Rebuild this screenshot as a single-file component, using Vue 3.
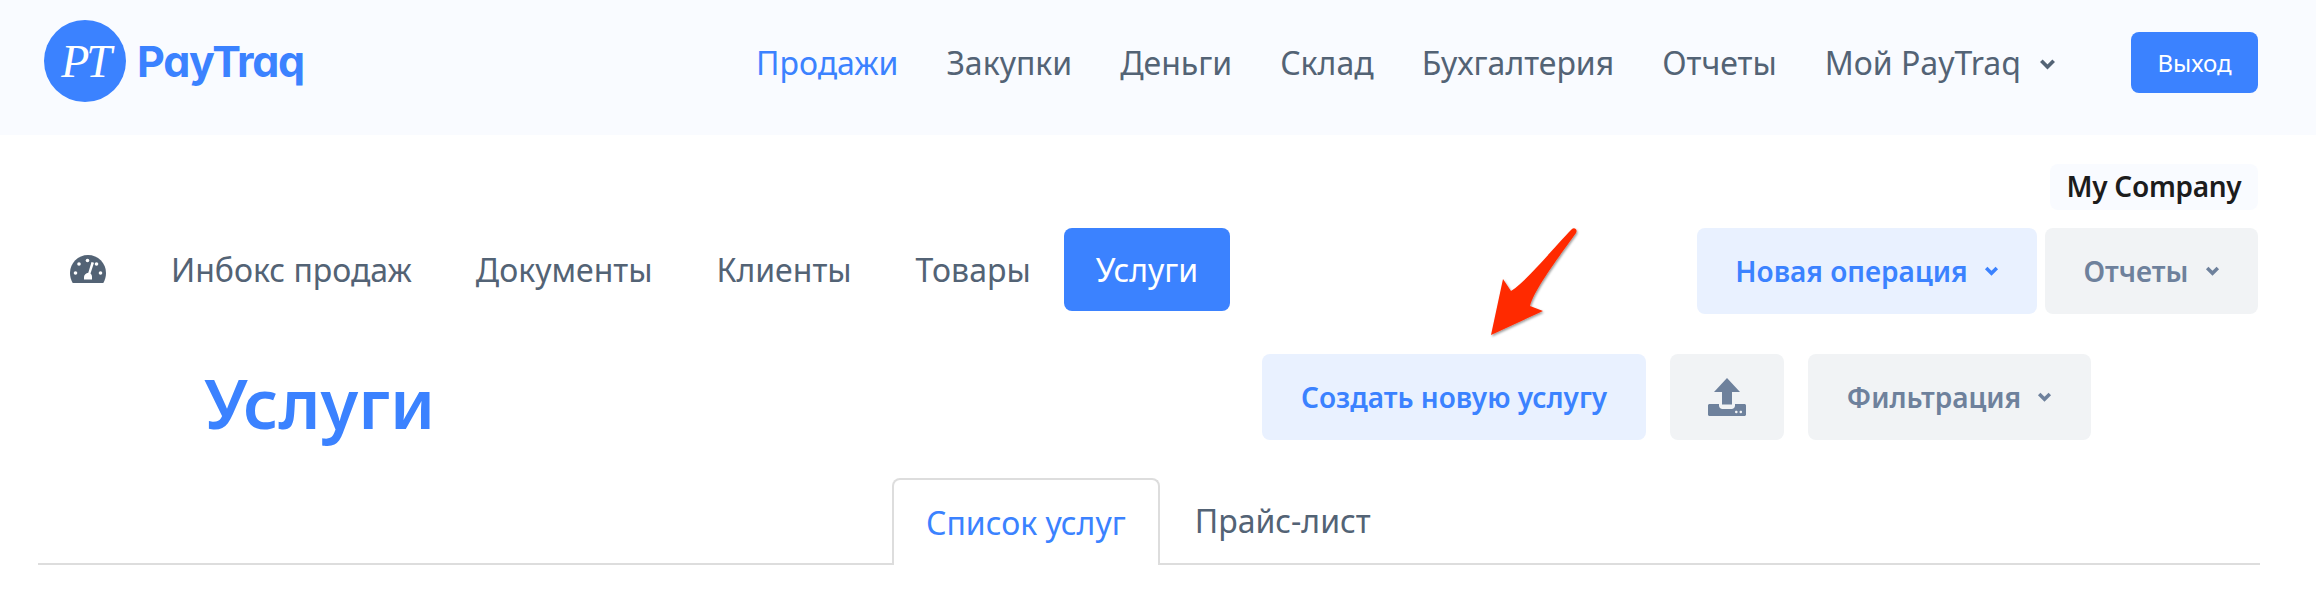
<script setup>
const topNav = ['Продажи', 'Закупки', 'Деньги', 'Склад', 'Бухгалтерия', 'Отчеты']
const subNav = ['Инбокс продаж', 'Документы', 'Клиенты', 'Товары']
</script>

<template>
  <div class="page">
    <header class="top">
      <div class="logo">
        <div class="mark"><span>PT</span></div>
        <span class="word">PayTraq</span>
      </div>
      <nav class="top-nav">
        <a v-for="(n, i) in topNav" :key="n" class="top-link" :class="{ on: i === 0 }">{{ n }}</a>
        <a class="top-link drop">Мой PayTraq
          <svg class="chev big" viewBox="0 0 16 12"><path d="M2.200 2.500L8 8.300l5.800-5.800" /></svg>
        </a>
      </nav>
      <button class="exit">Выход</button>
    </header>

    <main class="content">
      <div class="company-row"><span class="company">My Company</span></div>

      <div class="sub-row">
        <div class="sub-nav">
          <svg class="gauge" viewBox="0 0 36 28">
            <path fill="#536375" d="M18 0C8 0 0 8 0 18c0 3.600 1 7 2.700 10h30.600C35 25 36 21.600 36 18 36 8 28 0 18 0z" />
            <g fill="#fff">
              <circle cx="17.500" cy="5.500" r="1.800" />
              <circle cx="9" cy="9" r="1.800" />
              <circle cx="5.500" cy="18" r="1.800" />
              <circle cx="30.500" cy="18" r="1.800" />
              <circle cx="26.500" cy="9" r="1.800" />
              <path d="M21.500 7l2.500.8-3.500 10.700c1 1 1.500 2 1.500 3.500v2.500h-8v-2.500c0-2.200 2-3.800 4.300-4.200z" />
            </g>
          </svg>
          <a v-for="n in subNav" :key="n" class="sub-link">{{ n }}</a>
          <a class="sub-link active">Услуги</a>
        </div>
        <div class="sub-actions">
          <button class="btn blue w-op">Новая операция
            <svg class="chev" viewBox="0 0 15 10"><path d="M2.200 2l5.300 5.300L12.800 2" /></svg>
          </button>
          <button class="btn grey w-rep">Отчеты
            <svg class="chev" viewBox="0 0 15 10"><path d="M2.200 2l5.300 5.300L12.800 2" /></svg>
          </button>
        </div>
      </div>

      <div class="title-row">
        <h1>Услуги</h1>
        <div class="title-actions">
          <div class="create-wrap">
            <svg class="arrow" viewBox="0 0 110 125">
              <defs>
                <filter id="sh" x="-20%" y="-20%" width="150%" height="150%">
                  <feDropShadow dx="1" dy="1.500" stdDeviation="1" flood-color="#000" flood-opacity=".4" />
                </filter>
              </defs>
              <path filter="url(#sh)" fill="#ff2a00" d="M11 115L63 91 50 86C54 70 78 38 96 13 98 9 94 7 92 9 75 26 48 60 31 71L23 59z" />
            </svg>
            <button class="btn blue w-create">Создать новую услугу</button>
          </div>
          <button class="btn grey w-up">
            <svg class="upload" viewBox="0 0 38 38">
              <path fill="#6e819c" d="M19 0l13 14h-8v12.500h-10V14H6z" />
              <path fill="#6e819c" fill-rule="evenodd" d="M1.500 26H11v1.500c0 2 1.500 3.500 3.500 3.500h9c2 0 3.500-1.500 3.500-3.500V26h9.500c.8 0 1.500.7 1.500 1.500v9c0 .8-.7 1.500-1.500 1.500h-35C.7 38 0 37.300 0 36.500v-9C0 26.700.7 26 1.500 26zM27 34a1.300 1.300 0 1 0 0-.01zm4.500 0a1.300 1.300 0 1 0 0-.01z" />
            </svg>
          </button>
          <button class="btn grey w-filter">Фильтрация
            <svg class="chev" viewBox="0 0 15 10"><path d="M2.200 2l5.300 5.300L12.800 2" /></svg>
          </button>
        </div>
      </div>

      <div class="tabs">
        <a class="tab on">Список услуг</a>
        <a class="tab next">Прайс-лист</a>
      </div>
    </main>
  </div>
</template>

<style>
html, body { margin: 0; background: #fff; }
</style>

<style scoped>
.page {
  width: 2316px;
  height: 592px;
  overflow: hidden;
  font-family: "Noto Sans", "Open Sans", sans-serif;
  color: #536375;
}
.top {
  height: 135px;
  box-sizing: border-box;
  background: #f9fbff;
  display: flex;
  align-items: center;
  padding: 0 58px 10px 44px;
}
.logo { display: flex; align-items: center; gap: 11px; margin-bottom: 3px; }
.mark {
  width: 82px;
  height: 82px;
  border-radius: 50%;
  background: #3b82ff;
  display: flex;
  align-items: center;
  justify-content: center;
  color: #fff;
  font: italic 46px "Liberation Serif", serif;
  letter-spacing: -3px;
}
.word {
  font: 700 43px/1 "Inter", sans-serif;
  font-feature-settings: "cv11";
  color: #3b82ff;
  letter-spacing: -1.3px;
}
.top-nav {
  margin-left: auto;
  display: flex;
  align-items: center;
  gap: 48px;
  font-size: 32px;
}
.top-link { color: #536375; white-space: nowrap; }
.top-link.on { color: #3b82ff; }
.drop { display: flex; align-items: center; }
.chev {
  width: 15px;
  height: 10px;
  fill: none;
  stroke: currentColor;
  stroke-width: 3.500;
  margin-left: 16px;
}
.chev.big { width: 17px; height: 13px; margin-left: 18px; margin-top: 4px; }
.exit {
  margin-left: 75px;
  width: 127px;
  height: 61px;
  border: 0;
  border-radius: 8px;
  background: #3b82ff;
  color: #fff;
  font: 24px "Noto Sans", sans-serif;
  padding: 0;
}
.content { padding: 0 58px 0 38px; }
.company-row { display: flex; justify-content: flex-end; padding-top: 29px; }
.company {
  height: 46px;
  width: 208px;
  box-sizing: border-box;
  border-radius: 8px;
  background: #f9fbff;
  color: #1c1c1c;
  font-size: 28px;
  font-weight: 600;
  letter-spacing: -0.3px;
  line-height: 44px;
  text-align: center;
  white-space: nowrap;
}
.sub-row {
  margin-top: 18px;
  display: flex;
  justify-content: space-between;
  align-items: flex-start;
}
.sub-nav { display: flex; align-items: center; height: 83px; padding-left: 32px; }
.gauge { width: 36px; height: 28px; margin-right: 33px; margin-top: -2px; }
.sub-link {
  font-size: 32px;
  padding: 0 32px;
  color: #536375;
  white-space: nowrap;
  line-height: 83px;
  height: 83px;
}
.sub-link.active {
  background: #3b82ff;
  color: #fff;
  border-radius: 8px;
  margin-left: 1px;
}
.sub-actions { display: flex; gap: 8px; }
.btn {
  height: 86px;
  border: 0;
  border-radius: 8px;
  padding: 0;
  font: 600 28px "Noto Sans", sans-serif;
  white-space: nowrap;
  display: flex;
  align-items: center;
  justify-content: center;
}
.btn.blue { background: #e9f1ff; color: #3b82ff; }
.btn.grey { background: #f1f3f5; color: #6e819c; }
.w-op { width: 340px; }
.w-rep { width: 213px; }
.w-create { width: 384px; }
.w-up { width: 114px; }
.w-filter { width: 283px; }
.title-row {
  margin-top: 40px;
  display: flex;
  align-items: flex-start;
  padding-left: 166px;
}
h1 {
  margin: 5px 0 0;
  width: 1058px;
  flex: none;
  font-size: 69px;
  font-weight: 600;
  color: #3b82ff;
  line-height: 86px;
}
.title-actions { display: flex; gap: 24px; }
.create-wrap { position: relative; }
.arrow {
  position: absolute;
  width: 110px;
  height: 125px;
  left: 218px;
  top: -134px;
}
.upload { width: 38px; height: 38px; }
.tabs {
  margin-top: 33px;
  margin-right: -2px;
  height: 87px;
  box-sizing: border-box;
  border-bottom: 2px solid #dddddd;
  display: flex;
  padding-left: 854px;
  align-items: flex-end;
}
.tab {
  font-size: 32px;
  line-height: 1;
  padding: 27px 32px 0;
  height: 87px;
  box-sizing: border-box;
  color: #536375;
  white-space: nowrap;
  margin-bottom: -2px;
}
.tab.next { margin-left: 3px; }
.tab.on {
  color: #3b82ff;
  background: #fff;
  border: 2px solid #dddddd;
  border-bottom: 0;
  border-radius: 8px 8px 0 0;
  padding: 27px 32px 0;
}
</style>
